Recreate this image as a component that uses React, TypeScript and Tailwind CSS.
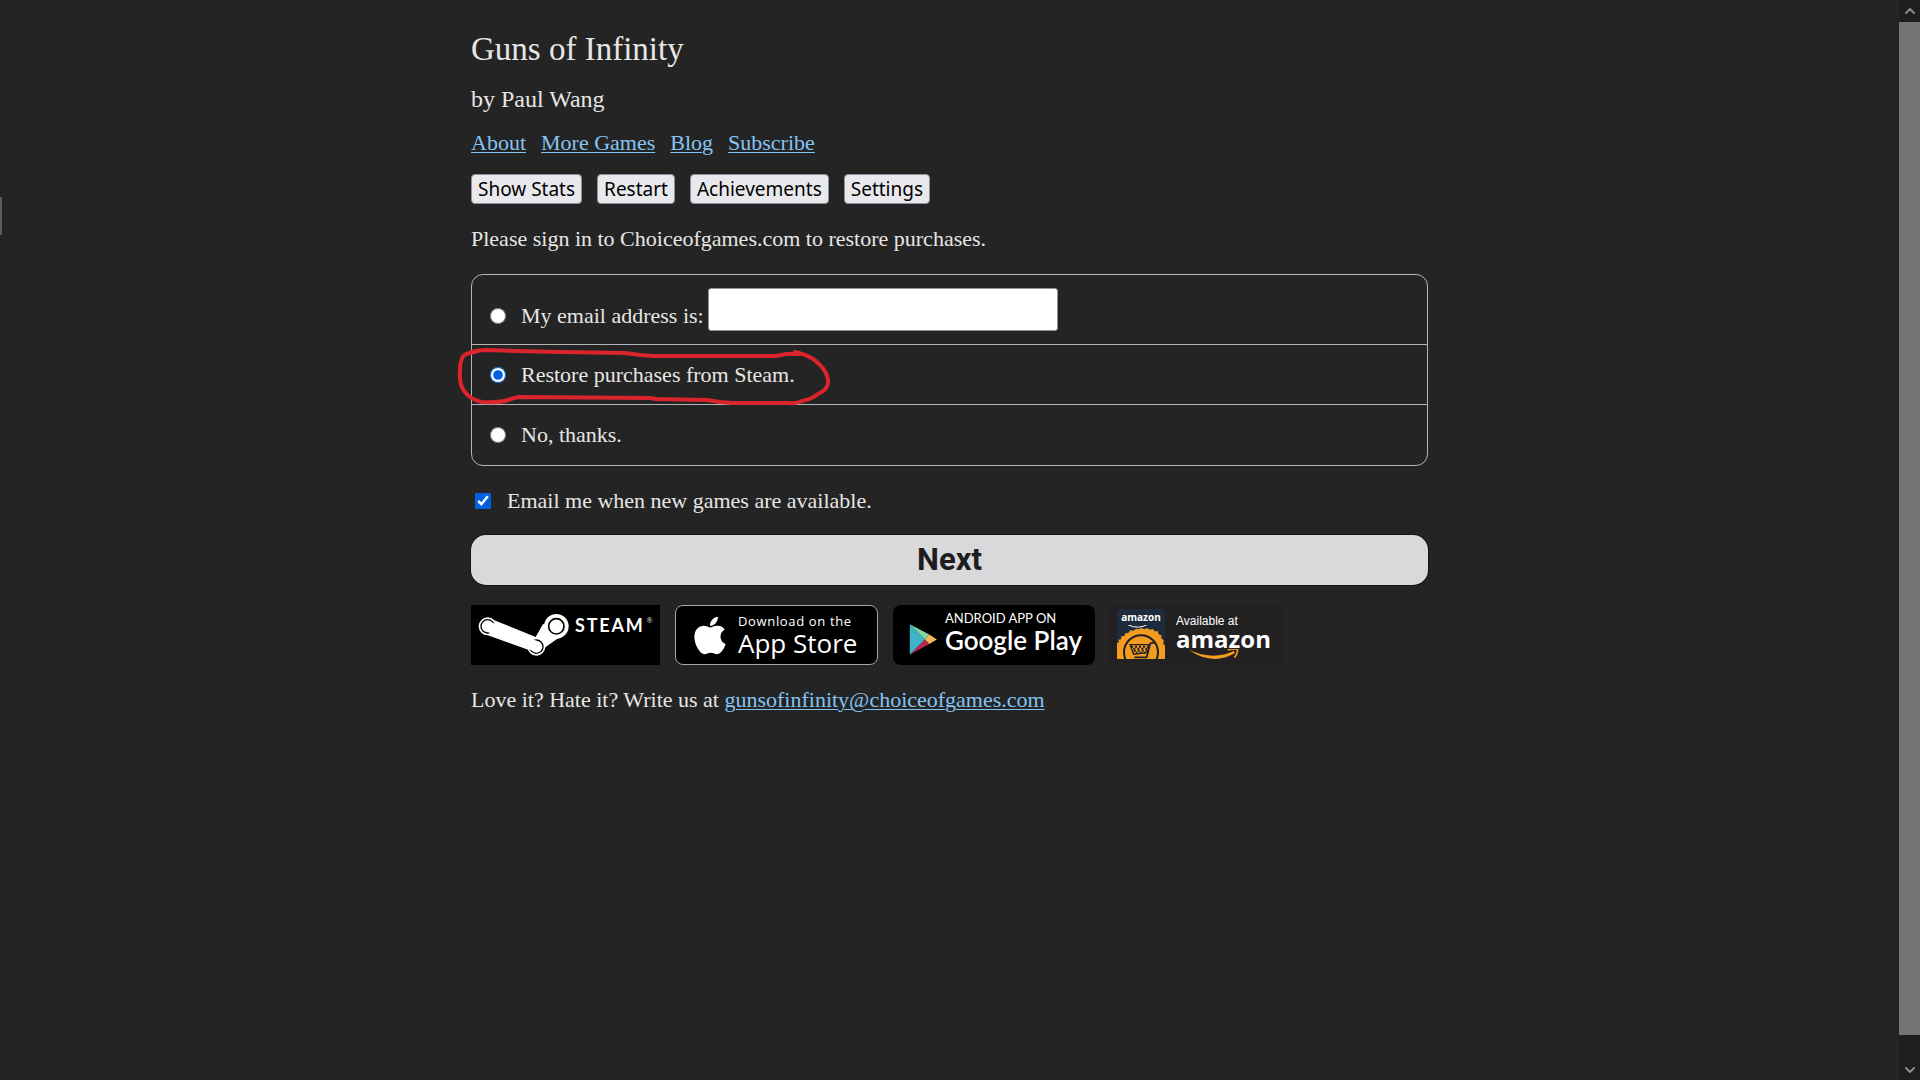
import { ChevronDown, ChevronUp } from "lucide-react";
import { FaApple } from "react-icons/fa";

const NAV_LINKS = ["About", "More Games", "Blog", "Subscribe"];
const ACTIONS = ["Show Stats", "Restart", "Achievements", "Settings"];

const linkClass = "text-[#84c4f2] underline decoration-1 underline-offset-2";
const radioClass = "size-4 shrink-0 accent-[#0060df]";

function SteamBadge() {
  return (
    <a href="#steam" className="flex h-[60px] w-[189px] items-start bg-black text-white">
      <svg viewBox="18 27 300 180" className="h-[60px] w-[100px]" aria-hidden>
        <path d="M69 65 L212 123 L234 84 L300 112 L238 156 L208 168 L60 115 Z" fill="#fff" />
        <circle cx="68" cy="91" r="27" fill="#fff" />
        <circle cx="214" cy="152" r="27" fill="#fff" />
        <circle cx="274" cy="91" r="37" fill="#fff" />
        {/* joints */}
        <circle cx="68" cy="91" r="20" fill="none" stroke="#000" strokeWidth="4" />
        <circle cx="214" cy="152" r="20" fill="none" stroke="#000" strokeWidth="4" />
        <circle cx="274" cy="91" r="23" fill="none" stroke="#000" strokeWidth="5" />
        {/* arm laid over the joints */}
        <path d="M72 76 L218 136 A16 16 0 0 1 206 166 L62 106 A16 16 0 0 1 72 76 Z" fill="#fff" />
      </svg>
      <span className="mt-2 ml-1 font-['Lato'] text-lg leading-6 font-bold tracking-widest">STEAM</span>
      <span className="mt-2 ml-[2px] text-[8px] leading-4">®</span>
    </a>
  );
}

function AppStoreBadge() {
  return (
    <a
      href="#app-store"
      className="flex h-[60px] w-[203px] items-center gap-3 rounded-lg border border-[#a6a6a6] bg-black pl-[18px] text-white"
    >
      <FaApple className="h-[43px] w-8" aria-hidden />
      <span className="flex flex-col">
        <span className="font-['Open_Sans'] text-[13px] leading-4 font-medium tracking-wider">Download on the</span>
        <span className="font-['Open_Sans'] text-[26px] leading-7 font-medium">App Store</span>
      </span>
    </a>
  );
}

function GooglePlayBadge() {
  return (
    <a href="#google-play" className="flex h-[60px] w-[202px] gap-2 rounded-lg bg-black pl-4 text-white">
      <svg viewBox="0 0 84 94" className="mt-[19px] h-[31px] w-7" aria-hidden>
        <path d="M2 1 L48 47 L2 93 Z" fill="#3fb4c9" />
        <path d="M2 1 L61 32 L48 47 Z" fill="#7fd6a0" />
        <path d="M2 93 L48 47 L61 61 Z" fill="#b8294f" />
        <path d="M61 32 L84 47 L61 61 L48 47 Z" fill="#f7b65c" />
      </svg>
      <span className="flex flex-col pt-[5px]">
        <span className="font-['Lato'] text-[13px] leading-4">ANDROID APP ON</span>
        <span className="font-['Lato'] text-[26px] leading-7 font-semibold">Google Play</span>
      </span>
    </a>
  );
}

function AmazonBadge() {
  return (
    <a href="#amazon" className="flex h-[60px] w-[173px] gap-[11px] bg-[#222021] pt-1 pl-[7px] text-white">
      <span className="flex h-[50px] w-12 flex-col items-center overflow-hidden rounded-t-sm bg-[#1d2b3d]">
        <span className="font-['Open_Sans'] text-[10px] leading-4 font-bold">amazon</span>
        <svg viewBox="0 0 144 102" className="h-[34px] w-12" aria-hidden>
          <path d="M34 0 Q64 14 92 -2" fill="none" stroke="#fff" strokeWidth="3" />
          <path
            d="M0 102 L0 54 L6 52 L4 44 L12 43 L13 34 L22 33 L25 25 L34 24 L40 16 L50 17 L57 11 L66 13 L73 9 L82 13 L90 9 L98 14 L107 12 L113 19 L122 19 L125 28 L133 31 L133 40 L140 46 L139 56 L144 62 L144 102 Z"
            fill="#f39c1f"
          />
          <circle cx="72" cy="82" r="51" fill="none" stroke="#1f2124" strokeWidth="6" />
          <path d="M112 53 L100 55 L89 97 L52 97" fill="none" stroke="#1f2124" strokeWidth="5" />
          <path d="M39 59 H98 L91 83 L50 88 Z" fill="none" stroke="#1f2124" strokeWidth="4" />
          <path d="M42 65 H96 M50 77 H93" stroke="#1f2124" strokeWidth="6" strokeDasharray="6 6" />
          <path d="M49 71 H95 M56 83 H91" stroke="#1f2124" strokeWidth="6" strokeDasharray="6 6" />
        </svg>
      </span>
      <span className="flex flex-col pt-1">
        <span className="font-['Liberation_Sans'] text-xs leading-4">Available at</span>
        <span className="font-['Open_Sans'] text-2xl leading-5 font-bold">amazon</span>
        <svg viewBox="0 0 160 36" className="ml-3 h-3 w-[53px]" aria-hidden>
          <path d="M2 2 Q74 52 142 12 L138 6 Q76 36 2 2 Z" fill="#f39c1f" />
          <path d="M120 3 Q150 -4 150 5 Q148 18 140 26" fill="none" stroke="#f39c1f" strokeWidth="5" />
        </svg>
      </span>
    </a>
  );
}

// Hand-drawn loop around the highlighted option
function MarkerLoop() {
  return (
    <svg
      viewBox="455 345 380 64"
      className="pointer-events-none absolute top-0 -left-[17px] z-10 h-16 w-[380px] overflow-visible"
      fill="none"
      stroke="#dc242c"
      strokeWidth="4"
      strokeLinecap="round"
      strokeLinejoin="round"
      aria-hidden
    >
      <path d="M471 352 Q478 350 487 350 L515 351 L560 352 L625 353 L640 355 L654 356 L736 356 L776 356 L786 354 L800 354 M795 352 Q810 355 818 363 Q827 371 828 380 Q829 389 818 394 Q812 399 802 401 Q796 404 788 403 L732 403 L720 402 L707 400 L656 399 L650 398 L519 397 Q513 398 508 400 Q499 403 482 402 Q471 400 464 391 Q459 384 460 370 Q460 357 466 354 L478 351" />
    </svg>
  );
}

function ScrollBar() {
  return (
    <div className="flex w-[21px] shrink-0 flex-col items-center bg-[#1e1e1e] text-[#8a8a8a]" aria-hidden>
      <div className="grid h-[22px] place-items-center">
        <ChevronUp className="size-4" strokeWidth={3} />
      </div>
      <div className="w-full flex-1 bg-[#757475]" />
      <div className="flex h-[45px] items-end pb-[2px]">
        <ChevronDown className="size-4" strokeWidth={3} />
      </div>
    </div>
  );
}

export default function App() {
  return (
    <div className="relative flex min-h-screen bg-[#242425] font-['Liberation_Serif',serif] text-[22px] leading-7 text-[#e8e6e3]">
      <div className="absolute top-[197px] left-0 h-[38px] w-[2px] bg-[#5c5c5c]" />
      <main className="min-w-0 flex-1 px-4">
        <div className="mx-auto max-w-[957px] pt-[29px]">
          <header>
            <h1 className="text-[33px] leading-10">Guns of Infinity</h1>
            <h2 className="mt-[14px] text-2xl leading-8">by Paul Wang</h2>
            <nav className="mt-[14px] flex flex-wrap gap-[15px]">
              {NAV_LINKS.map((label) => (
                <a key={label} href="#" className={linkClass}>
                  {label}
                </a>
              ))}
            </nav>
            <div className="mt-[17px] flex flex-wrap gap-[15px]">
              {ACTIONS.map((label) => (
                <button
                  key={label}
                  type="button"
                  className="h-[30px] rounded-[4px] border border-[#8f8f9d] bg-[#e9e9ed] px-[6px] font-['Noto_Sans'] text-[19px] leading-7 text-black"
                >
                  {label}
                </button>
              ))}
            </div>
          </header>

          <form>
            <p className="mt-[21px]">Please sign in to Choiceofgames.com to restore purchases.</p>

            <div className="mt-[21px] rounded-xl border border-[#b5b5b5]">
              <div className="flex h-[70px] items-center border-b border-[#b5b5b5] pl-[18px]">
                <input id="own-email" type="radio" name="restore" className={`${radioClass} mt-3`} />
                <label htmlFor="own-email" className="mt-3 ml-[15px]">
                  My email address is:
                </label>
                <input
                  type="email"
                  aria-label="Email address"
                  className="ml-1 h-[43px] w-[350px] rounded-[3px] border border-[#8f8f9d] bg-white px-2 text-black"
                />
              </div>
              <div className="relative flex h-[60px] items-center border-b border-[#b5b5b5] pl-[18px]">
                <input id="steam" type="radio" name="restore" defaultChecked className={radioClass} />
                <label htmlFor="steam" className="ml-[15px]">
                  Restore purchases from Steam.
                </label>
                <MarkerLoop />
              </div>
              <div className="flex h-[60px] items-center pl-[18px]">
                <input id="no-thanks" type="radio" name="restore" className={radioClass} />
                <label htmlFor="no-thanks" className="ml-[15px]">
                  No, thanks.
                </label>
              </div>
            </div>

            <div className="mt-[21px] flex items-center pl-1">
              <input id="subscribe" type="checkbox" defaultChecked className="size-4 accent-[#0060df]" />
              <label htmlFor="subscribe" className="ml-4">
                Email me when new games are available.
              </label>
            </div>

            <button
              type="submit"
              className="mt-5 h-[50px] w-full rounded-[15px] bg-[#d9d8da] font-['Roboto'] text-[31px] font-bold text-[#1d1d1e] ring-1 ring-[#161616]"
            >
              Next
            </button>
          </form>

          <div className="mt-5 flex flex-wrap gap-[15px]">
            <SteamBadge />
            <AppStoreBadge />
            <GooglePlayBadge />
            <AmazonBadge />
          </div>

          <p className="mt-[21px]">
            Love it? Hate it? Write us at{" "}
            <a href="#contact" className={linkClass}>
              gunsofinfinity@choiceofgames.com
            </a>
          </p>
        </div>
      </main>
      <ScrollBar />
    </div>
  );
}
